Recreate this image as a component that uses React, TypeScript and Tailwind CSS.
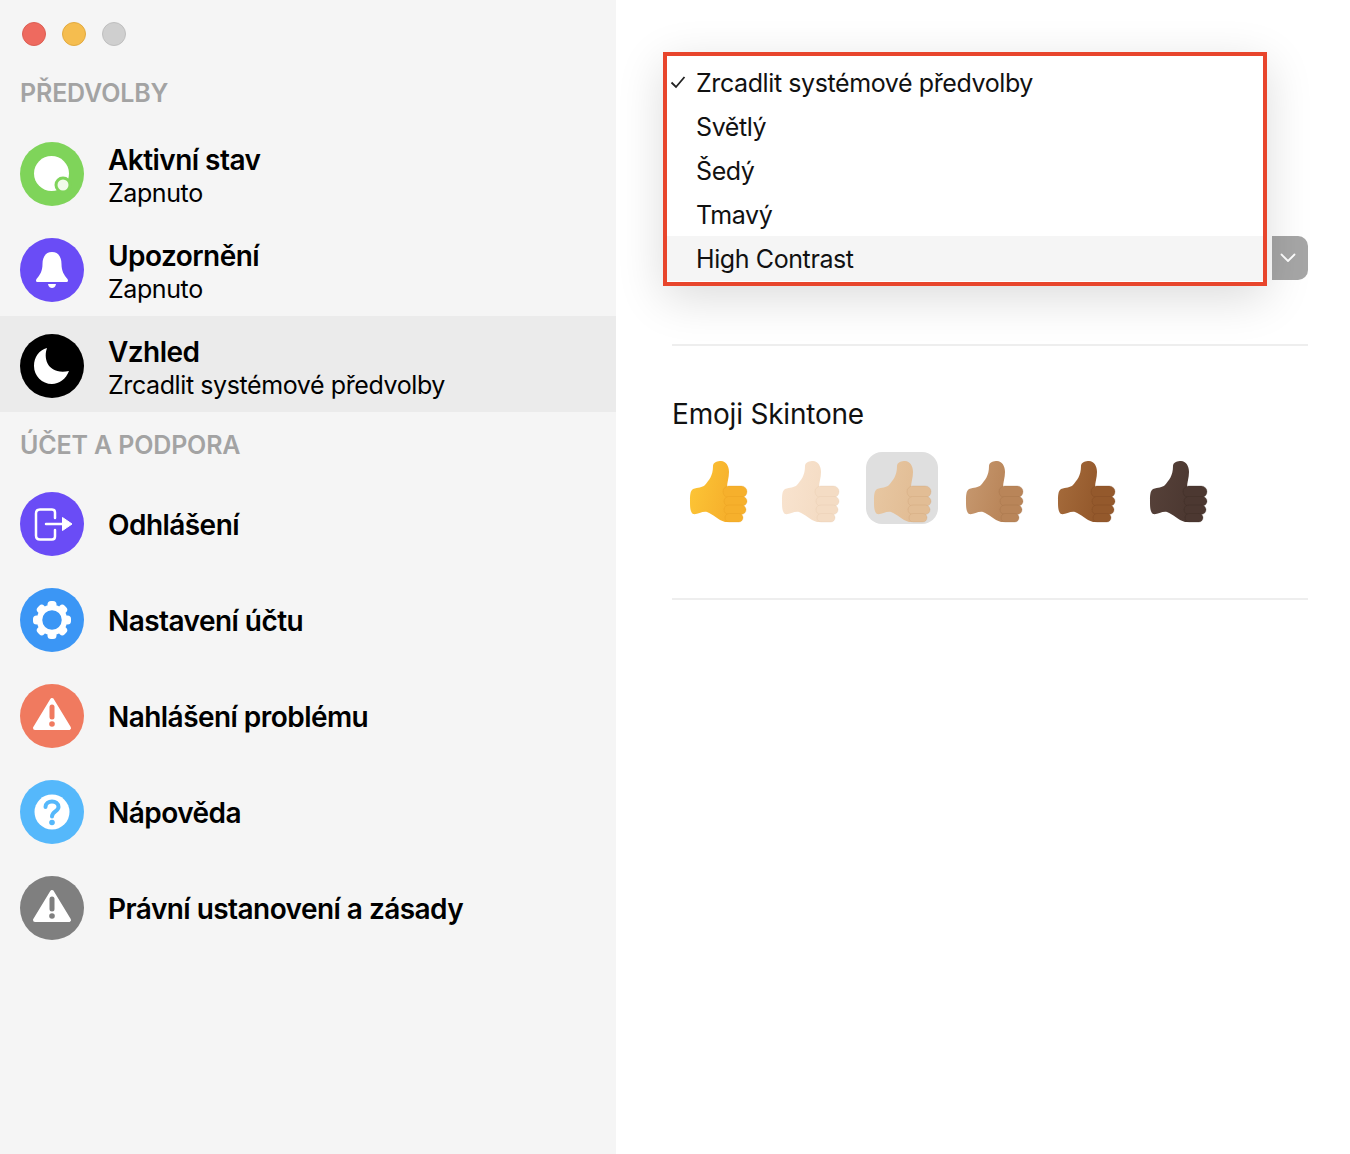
import { ReactNode } from "react"

const font = { fontFamily: "Inter, 'Noto Sans', sans-serif" }

function IconCircle({ bg, children }: { bg: string; children: ReactNode }) {
    return (
        <div className={`w-16 h-16 rounded-full shrink-0 ${bg}`}>
            <svg viewBox="0 0 64 64" width="64" height="64">{children}</svg>
        </div>
    )
}

const Warning = ({ mark }: { mark: string }) => (
    <>
        <path d="M32 16 L49 44 H15 Z" fill="#fff" stroke="#fff" strokeWidth="4" strokeLinejoin="round" />
        <path d="M32 23 V33" stroke={mark} strokeWidth="5" strokeLinecap="round" />
        <circle cx="32" cy="40" r="2.800" fill={mark} />
    </>
)

const gearTeeth = [0, 45, 90, 135, 180, 225, 270, 315]

const icons: Record<string, ReactNode> = {
    active: (
        <>
            <circle cx="31.500" cy="31.500" r="17.500" fill="#fff" />
            <circle cx="43" cy="43" r="8.500" fill="#7fd45a" />
            <circle cx="43" cy="43" r="5.500" fill="#f0fbe9" />
        </>
    ),
    bell: (
        <>
            <path d="M32 14 C25 14 22.500 20 22.500 26 C22.500 33 20 37 16.500 41 C15.500 43 16 44 18 44 H46 C48 44 48.500 43 47.500 41 C44 37 41.500 33 41.500 26 C41.500 20 39 14 32 14 Z" fill="#fff" />
            <path d="M28 46 H36 C35.500 49 33.500 50 32 50 C30.500 50 28.500 49 28 46 Z" fill="#fff" />
        </>
    ),
    moon: <path d="M27 14 C23 25 28 41 49 37 C46 45 39 50 32 50 C22 50 14 42 14 32 C14 23 19 16 27 14 Z" fill="#fff" />,
    logout: (
        <>
            <path d="M35 26 V20.500 C35 18.500 33.800 17.500 32 17.500 H20 C17.500 17.500 16 19 16 21.500 V43.500 C16 46 17.500 47.500 20 47.500 H32 C33.800 47.500 35 46.500 35 44.500 V38" fill="none" stroke="#fff" strokeWidth="2.500" strokeLinecap="round" />
            <path d="M26 32 H43" stroke="#fff" strokeWidth="2.500" strokeLinecap="round" />
            <path d="M42.500 25.500 L52 32 L42.500 38.500 Z" fill="#fff" stroke="#fff" strokeWidth="1" strokeLinejoin="round" />
        </>
    ),
    gear: (
        <>
            {gearTeeth.map(a => (
                <rect key={a} x="27.500" y="13" width="9" height="7" rx="3.500" fill="#fff" transform={`rotate(${a} 32 32)`} />
            ))}
            <circle cx="32" cy="32" r="12.500" fill="none" stroke="#fff" strokeWidth="5.500" />
        </>
    ),
    warnOrange: <Warning mark="#f07a5f" />,
    help: (
        <>
            <circle cx="32" cy="32" r="17.500" fill="#fff" />
            <path d="M25.500 27 C25.500 19.500 38.500 19.500 38.500 27 C38.500 31.500 32 31.500 32 36.500" fill="none" stroke="#55b8fb" strokeWidth="4" strokeLinecap="round" />
            <circle cx="32" cy="42.500" r="2.800" fill="#55b8fb" />
        </>
    ),
    warnGray: <Warning mark="#7f7f7f" />,
}

function Row({ icon, bg, title, sub, active }: { icon: string; bg: string; title: string; sub?: string; active?: boolean }) {
    return (
        <div className={`h-24 flex items-center pl-5 gap-6 ${active ? "bg-[#ebebeb]" : ""}`}>
            <div className={sub ? "pt-1" : ""}>
                <IconCircle bg={bg}>{icons[icon]}</IconCircle>
            </div>
            <div className={`text-black ${sub ? "pt-2" : "pt-0.5"}`}>
                <div className="text-[28px] leading-[34px] font-semibold tracking-[-0.55px]">{title}</div>
                {sub && <div className="text-[25px] leading-[33px] tracking-[-0.4px]">{sub}</div>}
            </div>
        </div>
    )
}

function Thumb({ id, base, light, dark }: { id: string; base: string; light: string; dark: string }) {
    return (
        <svg viewBox="0 0 72 72" width="72" height="72">
            <defs>
                <linearGradient id={id} x1="0" y1="0" x2="1" y2="0.3">
                    <stop offset="0" stopColor={light} />
                    <stop offset="1" stopColor={base} />
                </linearGradient>
            </defs>
            <path
                d="M11 37 C16 35 20 36 23 33 C27 28 31 24 31 14 C31 10 36 9 39 9 C44 9 47 14 47 20 C47 26 45 30 45 36 L52 70 L43 70 C36 68 31 62 25 60 C20 59 15 63 11 62 C8 60 8 54 8 49 C8 44 8 39 11 37 Z"
                fill={`url(#${id})`}
            />
            <rect x="41" y="34" width="24" height="11.500" rx="5.700" fill={base} stroke={dark} strokeOpacity="0.35" strokeWidth="0.8" />
            <rect x="42" y="44.500" width="23" height="9.500" rx="4.700" fill={base} stroke={dark} strokeOpacity="0.35" strokeWidth="0.8" />
            <rect x="42" y="53" width="22" height="9.500" rx="4.700" fill={base} stroke={dark} strokeOpacity="0.35" strokeWidth="0.8" />
            <rect x="43" y="61.500" width="18" height="8.500" rx="4.200" fill={base} stroke={dark} strokeOpacity="0.35" strokeWidth="0.8" />
        </svg>
    )
}

const tones = [
    { base: "#f6b02c", light: "#fdc737", dark: "#e39a1d" },
    { base: "#f4dcc4", light: "#f9e4d0", dark: "#e3c4a8" },
    { base: "#e2bd95", light: "#e8c8a3", dark: "#c99c70" },
    { base: "#b98559", light: "#c79970", dark: "#9c6c44" },
    { base: "#94592c", light: "#a66c3c", dark: "#784520" },
    { base: "#4c3831", light: "#57423a", dark: "#372722" },
]

const options = ["Zrcadlit systémové předvolby", "Světlý", "Šedý", "Tmavý", "High Contrast"]

export default function App() {
    return (
        <div className="h-screen flex bg-white overflow-hidden" style={font}>
            {/* SIDEBAR */}
            <aside className="w-[616px] shrink-0 bg-[#f5f5f5]">
                <div className="flex gap-4 pl-[22px] pt-[22px]">
                    <span className="w-6 h-6 rounded-full bg-[#ee6a5f] border border-[#dc5f54]" />
                    <span className="w-6 h-6 rounded-full bg-[#f5bd4f] border border-[#e2aa40]" />
                    <span className="w-6 h-6 rounded-full bg-[#cfcfcf] border border-[#bfbfbf]" />
                </div>
                <h2 className="pl-[20px] mt-[30px] h-12 text-[25px] leading-[34px] font-semibold tracking-[-0.15px] text-[#a3a3a3]">PŘEDVOLBY</h2>
                <Row icon="active" bg="bg-[#7fd45a]" title="Aktivní stav" sub="Zapnuto" />
                <Row icon="bell" bg="bg-[#6a4cf6]" title="Upozornění" sub="Zapnuto" />
                <Row icon="moon" bg="bg-black" title="Vzhled" sub="Zrcadlit systémové předvolby" active />
                <h2 className="pl-[20px] pt-4 h-16 text-[25px] leading-[34px] font-semibold tracking-[-0.15px] text-[#a3a3a3]">ÚČET A PODPORA</h2>
                <Row icon="logout" bg="bg-[#6a4cf6]" title="Odhlášení" />
                <Row icon="gear" bg="bg-[#3b96f5]" title="Nastavení účtu" />
                <Row icon="warnOrange" bg="bg-[#f07a5f]" title="Nahlášení problému" />
                <Row icon="help" bg="bg-[#55b8fb]" title="Nápověda" />
                <Row icon="warnGray" bg="bg-[#7f7f7f]" title="Právní ustanovení a zásady" />
            </aside>

            {/* OBSAH */}
            <main className="flex-1 pl-14 pr-[42px] pt-[236px]">
                <div className="relative h-11 flex justify-end">
                    <div className="w-9 h-11 rounded-r-[10px] bg-[#a6a6a6] flex items-center justify-center pr-1">
                        <svg viewBox="0 0 16 10" width="16" height="10">
                            <path d="M1.500 1.500 L8 8 L14.500 1.500" fill="none" stroke="#fff" strokeWidth="1.800" strokeLinecap="round" strokeLinejoin="round" />
                        </svg>
                    </div>
                    <div className="absolute left-[-9px] top-[-184px] w-[604px] h-[234px] bg-white border-4 border-[#e8452c] pt-[5px] shadow-[0_12px_44px_rgba(0,0,0,0.14)]">
                        {options.map((o, i) => (
                            <div key={o} className={`relative pl-[29px] flex items-center text-[25px] tracking-[-0.4px] text-[#111] ${i === 4 ? "h-[45px] -mt-px pt-[3px] bg-[#f5f5f5]" : "h-11 pt-0.5"}`}>
                                {i === 0 && (
                                    <svg viewBox="0 0 16 14" width="16" height="14" className="absolute left-[3px] top-[14px]">
                                        <path d="M1.500 7.500 L6 12 L14.500 2" fill="none" stroke="#222" strokeWidth="1.800" />
                                    </svg>
                                )}
                                {o}
                            </div>
                        ))}
                    </div>
                </div>

                <div className="mt-16 border-t-2 border-[#eeeeee]" />
                <h3 className="mt-[50px] text-[28px] leading-9 tracking-[-0.2px] text-[#111]">Emoji Skintone</h3>
                <div className="mt-5 pl-2.5 flex gap-5">
                    {tones.map((t, i) => (
                        <div key={t.base} className={`w-[72px] h-[72px] rounded-2xl ${i === 2 ? "bg-[#dfdfdf]" : ""}`}>
                            <Thumb id={`tone${i}`} base={t.base} light={t.light} dark={t.dark} />
                        </div>
                    ))}
                </div>
                <div className="mt-[74px] border-t-2 border-[#eeeeee]" />
            </main>
        </div>
    )
}
